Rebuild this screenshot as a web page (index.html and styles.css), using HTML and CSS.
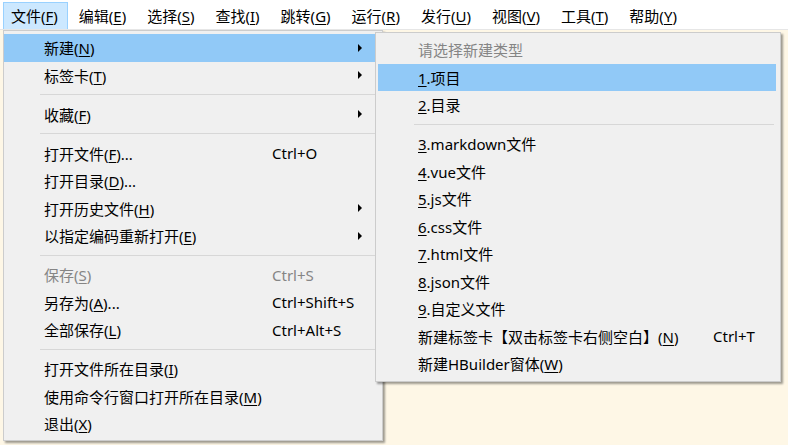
FILE: index.html
```html
<!DOCTYPE html>
<html lang="zh-CN">
<head>
<meta charset="utf-8">
<title>HBuilder 文件菜单</title>
<link rel="stylesheet" href="styles.css">
</head>
<body>
<div class="menubar">
  <div class="mb-item active">文件(<u>F</u>)</div>
  <div class="mb-item">编辑(<u>E</u>)</div>
  <div class="mb-item">选择(<u>S</u>)</div>
  <div class="mb-item">查找(<u>I</u>)</div>
  <div class="mb-item">跳转(<u>G</u>)</div>
  <div class="mb-item">运行(<u>R</u>)</div>
  <div class="mb-item">发行(<u>U</u>)</div>
  <div class="mb-item">视图(<u>V</u>)</div>
  <div class="mb-item">工具(<u>T</u>)</div>
  <div class="mb-item">帮助(<u>Y</u>)</div>
</div>
<div class="workspace"></div>

<div class="menu main-menu">
  <div class="row hl"><span class="label">新建(<u>N</u>)</span><span class="key"></span><span class="arrow"></span></div>
  <div class="row"><span class="label">标签卡(<u>T</u>)</span><span class="key"></span><span class="arrow"></span></div>
  <div class="sep"></div>
  <div class="row"><span class="label">收藏(<u>F</u>)</span><span class="key"></span><span class="arrow"></span></div>
  <div class="sep"></div>
  <div class="row"><span class="label">打开文件(<u>F</u>)...</span><span class="key">Ctrl+O</span><span class="noarrow"></span></div>
  <div class="row"><span class="label">打开目录(<u>D</u>)...</span><span class="key"></span><span class="noarrow"></span></div>
  <div class="row"><span class="label">打开历史文件(<u>H</u>)</span><span class="key"></span><span class="arrow"></span></div>
  <div class="row"><span class="label">以指定编码重新打开(<u>E</u>)</span><span class="key"></span><span class="arrow"></span></div>
  <div class="sep"></div>
  <div class="row disabled"><span class="label">保存(<u>S</u>)</span><span class="key">Ctrl+S</span><span class="noarrow"></span></div>
  <div class="row"><span class="label">另存为(<u>A</u>)...</span><span class="key">Ctrl+Shift+S</span><span class="noarrow"></span></div>
  <div class="row"><span class="label">全部保存(<u>L</u>)</span><span class="key">Ctrl+Alt+S</span><span class="noarrow"></span></div>
  <div class="sep"></div>
  <div class="row"><span class="label">打开文件所在目录(<u>I</u>)</span><span class="key"></span><span class="noarrow"></span></div>
  <div class="row"><span class="label">使用命令行窗口打开所在目录(<u>M</u>)</span><span class="key"></span><span class="noarrow"></span></div>
  <div class="row"><span class="label">退出(<u>X</u>)</span><span class="key"></span><span class="noarrow"></span></div>
</div>

<div class="menu sub-menu">
  <div class="row disabled"><span class="label">请选择新建类型</span><span class="key"></span></div>
  <div class="row hl"><span class="label"><u>1</u>.项目</span><span class="key"></span></div>
  <div class="row"><span class="label"><u>2</u>.目录</span><span class="key"></span></div>
  <div class="sep"></div>
  <div class="row"><span class="label"><u>3</u>.markdown文件</span><span class="key"></span></div>
  <div class="row"><span class="label"><u>4</u>.vue文件</span><span class="key"></span></div>
  <div class="row"><span class="label"><u>5</u>.js文件</span><span class="key"></span></div>
  <div class="row"><span class="label"><u>6</u>.css文件</span><span class="key"></span></div>
  <div class="row"><span class="label"><u>7</u>.html文件</span><span class="key"></span></div>
  <div class="row"><span class="label"><u>8</u>.json文件</span><span class="key"></span></div>
  <div class="row"><span class="label"><u>9</u>.自定义文件</span><span class="key"></span></div>
  <div class="row"><span class="label">新建标签卡【双击标签卡右侧空白】(<u>N</u>)</span><span class="key">Ctrl+T</span></div>
  <div class="row"><span class="label">新建HBuilder窗体(<u>W</u>)</span><span class="key"></span></div>
</div>
</body>
</html>
```

FILE: styles.css
```css
* {
  box-sizing: border-box;
}

html, body {
  margin: 0;
  padding: 0;
}

body {
  width: 788px;
  height: 445px;
  overflow: hidden;
  position: relative;
  background: #fef7e6;
  font-family: "Noto Sans", "Noto Sans CJK SC", sans-serif;
  font-size: 15px;
  color: #000;
}

u {
  text-decoration: underline;
  text-underline-offset: 2px;
  text-decoration-thickness: 1px;
}

.menubar {
  height: 30px;
  background: #ffffff;
  border-bottom: 1px solid #e6e6e6;
  display: flex;
  align-items: flex-end;
  gap: 3px;
  padding-left: 3px;
}

.mb-item {
  height: 27px;
  line-height: 26px;
  padding: 0 9px 0 7px;
  border: 1px solid transparent;
  border-bottom: none;
  white-space: nowrap;
}

.mb-item.active {
  background: #cce8ff;
  border-color: #99d1ff;
}

.workspace {
  height: 415px;
}

.menu {
  position: absolute;
  background: #f0f0f0;
  border: 1px solid #cccccc;
  box-shadow: 2px 2px 2px rgba(0, 0, 0, 0.38);
}

.main-menu {
  left: 3px;
  top: 30px;
  width: 380px;
  height: 411px;
  padding: 3px 1px 0 0;
}

.sub-menu {
  left: 375px;
  top: 32px;
  width: 406px;
  height: 350px;
  padding: 3px 4px 0 2px;
}

.row {
  height: 27.5px;
  display: flex;
  align-items: center;
  padding-left: 40px;
  white-space: nowrap;
}

.row.hl {
  background: #91c9f7;
}

.row.disabled {
  color: #858585;
}

.main-menu .label {
  width: 228px;
  flex: none;
}

.sub-menu .label {
  width: 295px;
  flex: none;
}

.key {
  flex: 1;
}

.arrow,
.noarrow {
  width: 27px;
  flex: none;
  display: flex;
  align-items: center;
}

.arrow::before {
  content: "";
  margin-left: 4px;
  width: 0;
  height: 0;
  border-top: 4px solid transparent;
  border-bottom: 4px solid transparent;
  border-left: 4px solid #000;
}

.sep {
  height: 11.5px;
  display: flex;
  align-items: center;
  margin: 0 2px 0 36px;
}

.sep::before {
  content: "";
  flex: 1;
  height: 1px;
  background: #d7d7d7;
}
```
